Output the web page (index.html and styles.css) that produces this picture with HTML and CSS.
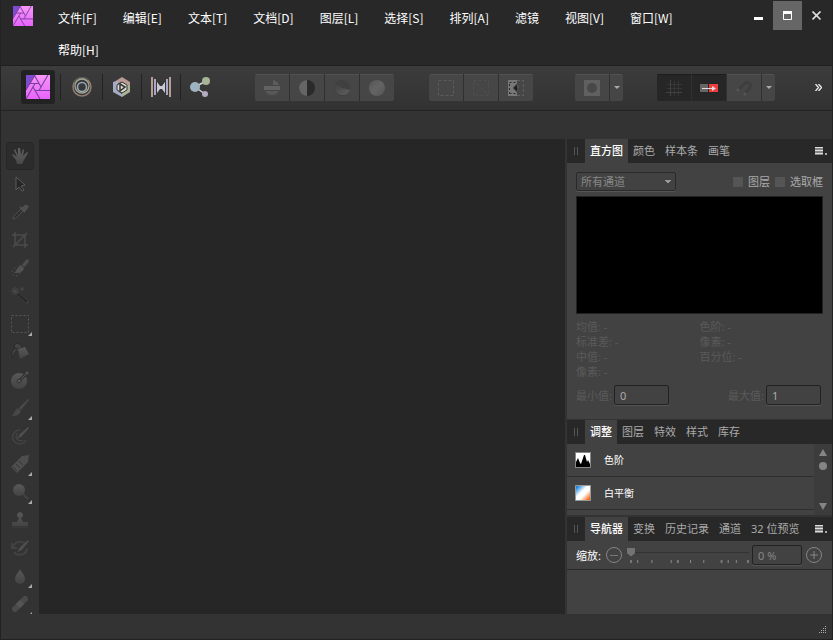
FILE: index.html
```html
<!doctype html>
<html lang="zh-CN">
  <head>
    <meta charset="utf-8">
    <meta name="viewport" content="width=device-width, initial-scale=1">
    <title>Photo</title>
    <link rel="stylesheet" href="styles.css">
  </head>
  <body>
    <svg class="defs" width="0" height="0" aria-hidden="true">
      <defs>
        <linearGradient id="pink" x1="0" y1="0" x2="0" y2="1">
          <stop offset="0" stop-color="#f797f8"/><stop offset="1" stop-color="#e763fb"/>
        </linearGradient>
        <linearGradient id="tool" x1="0" y1="0" x2="0" y2="1">
          <stop offset="0" stop-color="#626262"/><stop offset="1" stop-color="#484848"/>
        </linearGradient>
        <linearGradient id="sweep" x1="0" y1="0" x2="1" y2="1">
          <stop offset="0" stop-color="#404040"/><stop offset="1" stop-color="#606060"/>
        </linearGradient>
        <linearGradient id="sphere" x1="0" y1="0" x2="1" y2="1">
          <stop offset="0" stop-color="#565656"/><stop offset="0.5" stop-color="#646464"/><stop offset="1" stop-color="#545454"/>
        </linearGradient>
        <linearGradient id="balance" x1="0" y1="0" x2="1" y2="1">
          <stop offset="0.1" stop-color="#1683dc"/><stop offset="0.42" stop-color="#fff"/>
          <stop offset="0.6" stop-color="#fff"/><stop offset="0.9" stop-color="#f36a1c"/>
        </linearGradient>
        <symbol id="logo" viewBox="0 0 24 24">
          <rect width="24" height="24" fill="url(#pink)"/>
          <path d="M0 0h9L0 15z" fill="#7d4bd0"/>
          <path d="M9 0L0 15M13 8.500H4M15 12L8.300 0M13 15.500L19.500 4.200 22 0M9 15.500h15M7 12l7 12M9 8.500L0 24" fill="none" stroke="#7a3f9c" stroke-width="1.100"/>
        </symbol>
      </defs>
    </svg>

    <header class="titlebar">
      <svg class="app-icon" width="20" height="20"><use href="#logo"/></svg>
      <nav class="menu">
        <a href="#">文件[F]</a>
        <a href="#">编辑[E]</a>
        <a href="#">文本[T]</a>
        <a href="#">文档[D]</a>
        <a href="#">图层[L]</a>
        <a href="#">选择[S]</a>
        <a href="#">排列[A]</a>
        <a href="#">滤镜</a>
        <a href="#">视图[V]</a>
        <a href="#">窗口[W]</a>
        <a href="#">帮助[H]</a>
      </nav>
      <div class="window-buttons">
        <button type="button" aria-label="最小化"><svg width="10" height="10"><path d="M0 6h9v3H0z" fill="#fff"/></svg></button>
        <button type="button" class="maximize" aria-label="最大化"><svg width="10" height="10"><path d="M.5 1v7.500h8V1z" fill="none" stroke="#fff"/><path d="M0 0h9v3H0z" fill="#fff"/></svg></button>
        <button type="button" aria-label="关闭"><svg width="10" height="10"><path d="M.5.5l8 8m0-8l-8 8" stroke="#ddd" stroke-width="1.700"/></svg></button>
      </div>
    </header>

    <div class="toolbar">
      <div class="personas">
        <button type="button" class="active" aria-label="Photo"><svg width="24" height="24"><use href="#logo"/></svg></button>
        <button type="button" aria-label="Liquify"><svg width="20" height="20" viewBox="0 0 20 20" fill="none">
          <circle cx="10" cy="10" r="9" stroke="#8f7a76" stroke-width="1.500"/>
          <path d="M2 6a9 9 0 0 1 14-3" stroke="#5e5c5a" stroke-width="2"/>
          <circle cx="10" cy="9" r="7" stroke="#a4a98e" stroke-width="1.300"/>
          <circle cx="10" cy="10" r="4.500" stroke="#97a6b8" stroke-width="1.600"/></svg></button>
        <button type="button" aria-label="Develop"><svg width="20" height="20" viewBox="0 0 20 20">
          <path d="M2 5l8-5 8 5v6l-5-4-4-2-4 2z" fill="#b99a94"/>
          <path d="M1 5l5-1v10l4 3v3l-9-5z" fill="#a5abc4"/>
          <path d="M18 9v6l-8 5v-4l5-3V7z" fill="#a9b596"/>
          <path d="M10 5l5 3v5l-5 3-5-3V8z" fill="#dadbd0" stroke="#343434"/>
          <path d="M8 7l5 3-5 4z" fill="#dadbd0" stroke="#343434" stroke-width="1.500"/></svg></button>
        <button type="button" aria-label="Tone Mapping"><svg width="20" height="20" viewBox="0 0 20 20">
          <path d="M0 0h2v20H0zM18 0h2v20h-2z" fill="#b89d91"/>
          <path d="M3 2h2v16H3zM15 2h2v16h-2z" fill="#a4a8c3"/>
          <path d="M6 5l3 4h2l3-4v11l-3-4H9l-3 4z" fill="#ccc9d7"/></svg></button>
        <button type="button" aria-label="Export"><svg width="20" height="20" viewBox="0 0 20 20">
          <path d="M5 10l11-6M5 10l10 7" stroke="#d5d5d5" stroke-width="1.500"/>
          <circle cx="5" cy="10" r="5" fill="#9db4c0"/><circle cx="16" cy="4" r="4" fill="#a7b497"/><circle cx="15" cy="17" r="3" fill="#b5abc0"/></svg></button>
      </div>

      <div class="group auto">
        <button type="button" aria-label="自动色阶"><svg width="16" height="16"><path d="M9 0a8 8 0 0 1 6 5H9z" fill="#5c5c5c"/><path d="M0 6h16v4H0z" fill="#626262"/><path d="M1 11h14a8 8 0 0 1-14 0z" fill="#585858"/></svg></button>
        <button type="button" aria-label="自动对比度"><svg width="16" height="16"><circle cx="8" cy="8" r="8" fill="#2a2a2a"/><path d="M8 0a8 8 0 0 0 0 16z" fill="#656565"/></svg></button>
        <button type="button" aria-label="自动颜色"><svg width="16" height="16"><circle cx="8" cy="8" r="8" fill="#404040"/><path d="M8 8L1 4a8 8 0 1 0 15 6z" fill="url(#sweep)"/></svg></button>
        <button type="button" aria-label="自动白平衡"><svg width="16" height="16"><circle cx="8" cy="8" r="8" fill="url(#sphere)"/></svg></button>
      </div>

      <div class="group selection">
        <button type="button" aria-label="全选"><svg width="16" height="16"><path d="M.5.5h15v15H.5z" fill="none" stroke="#5c5c5c" stroke-dasharray="3 2"/></svg></button>
        <button type="button" aria-label="取消选择"><svg width="16" height="16"><path d="M.5.5h15v15H.5zL15 15" fill="none" stroke="#4e4e4e" stroke-dasharray="3 2"/></svg></button>
        <button type="button" aria-label="反选"><svg width="16" height="16"><path d="M0 0h9v16H0z" fill="#777"/><path d="M1.500 2.500h6M1.500 13.500h6M1.500 4v9" fill="none" stroke="#292929" stroke-dasharray="2 2"/><path d="M9 4v8L5 8z" fill="#222"/><path d="M9 .5h6.500v15H9M10 5v6" fill="none" stroke="#606060" stroke-dasharray="3 2"/></svg></button>
      </div>

      <div class="group mask">
        <button type="button" aria-label="快速蒙版"><svg width="16" height="16"><path d="M0 0h16v16H0z" fill="#606060"/><circle cx="8" cy="8" r="5" fill="#484848"/></svg></button>
        <button type="button" class="arrow" aria-label="蒙版选项"><svg width="6" height="4"><path d="M0 0h6L3 3z" fill="#aaa"/></svg></button>
      </div>

      <div class="group snapping">
        <button type="button" class="on" aria-label="网格"><svg width="16" height="16"><path d="M1 4.500h15M1 8.500h15M4.500 1v15M8.500 1v15M12.500 1v15" stroke="#363636"/><path d="M0 12.500h16M4.500 0v16" stroke="#424242"/></svg></button>
        <button type="button" class="on" aria-label="强制像素对齐"><svg width="18" height="8"><path d="M0 0h8v8H0z" fill="#666"/><path d="M9 0h9v8H9z" fill="#ef3d3d"/><path d="M2 4.500h11" stroke="#ddd"/><path d="M12 2l4 2.500-4 2.500z" fill="#ddd"/></svg></button>
        <button type="button" aria-label="吸附"><svg width="16" height="16"><path d="M2 10l6-6c3-4 9 0 5 5l-5 5" fill="none" stroke="#3e3e3e" stroke-width="3"/><path d="M1 11l2-2M8 15l2-2" stroke="#555" stroke-width="3"/></svg></button>
        <button type="button" class="arrow" aria-label="吸附选项"><svg width="6" height="4"><path d="M0 0h6L3 3z" fill="#aaa"/></svg></button>
      </div>
      <button type="button" class="more" aria-label="更多"><svg width="7" height="7"><path d="M.5 0l3 3.500-3 3.500M3.500 0l3 3.500-3 3.500" fill="none" stroke="#eee" stroke-width="1.300"/></svg></button>
    </div>

    <div class="context-bar"></div>

    <main class="workspace">
      <div class="tools">
        <button type="button" class="active" aria-label="抓手"><svg width="18" height="18"><path d="M6 17l-1-4-4-5 1-1 4 3-3-7 1-1 3 6V1h2l1 7 2-6 1 1-1 6 4-4 1 1-4 7-2 4z" fill="url(#tool)"/></svg></button>
        <button type="button" aria-label="移动"><svg width="18" height="18"><path d="M5 2l9 8-4 1 3 4-2 1-3-4-3 3z" fill="#232323" stroke="#666"/></svg></button>
        <button type="button" aria-label="颜色选取器"><svg width="18" height="18"><path d="M2 16l1-3 7-7 2 2-7 7z" fill="#2c2c2c" stroke="#555"/><path d="M9 4l5 5M11 6l3-3c2-1 3 1 2 2l-3 3z" stroke="#585858" stroke-width="2" fill="#585858"/></svg></button>
        <button type="button" aria-label="裁剪"><svg width="18" height="18"><path d="M4 1v13h13M1 4h13v13M2 16L16 2" fill="none" stroke="#525252" stroke-width="1.500"/></svg></button>
        <button type="button" aria-label="选择画笔"><svg width="18" height="18"><path d="M11 6l4-5 3-1-1 4-4 4z" fill="#555"/><path d="M10 6l3 3c-1 5-6 5-10 5 3-2 3-6 7-8z" fill="#5a5a5a"/><circle cx="5" cy="13" r="4" fill="none" stroke="#555" stroke-dasharray="2 2"/></svg></button>
        <button type="button" aria-label="魔棒"><svg width="18" height="18"><path d="M5 5l12 11" stroke="#484848" stroke-width="3"/><path d="M6 6l10 9" stroke="#242424" stroke-width="2"/><path d="M4 0v8M0 4h8M1 1l6 6M7 1L1 7M11 0v4M9 2h4" stroke="#505050"/></svg></button>
        <button type="button" class="more-tools" aria-label="矩形选框"><svg width="18" height="18"><path d="M.5.5h17v17H.5z" fill="none" stroke="#636363" stroke-dasharray="2 2"/></svg></button>
        <button type="button" aria-label="填充"><svg width="18" height="18"><path d="M7 6l7-2 4 7-9 5z" fill="url(#tool)"/><path d="M7 6c-7-1-6 4-6 9 3-2 1-7 6-7M4 5c-3-5 5-7 7 0" fill="#494949" stroke="#292929"/></svg></button>
        <button type="button" aria-label="渐变"><svg width="18" height="18"><circle cx="8" cy="10" r="8" fill="url(#tool)"/><path d="M8 10l8-8" stroke="#303030" stroke-width="3"/><path d="M8 10l8-8" stroke="#606060"/><circle cx="8" cy="10" r="2" fill="#606060" stroke="#333"/><circle cx="16" cy="2" r="1.500" fill="#5c5c5c"/></svg></button>
        <button type="button" class="more-tools" aria-label="画笔"><svg width="18" height="18"><path d="M8 9l9-9 1 1-8 10z" fill="#505050"/><path d="M7 9l3 3c-2 5-6 5-10 5 4-2 3-6 7-8z" fill="#4c4c4c"/></svg></button>
        <button type="button" aria-label="颜色替换"><svg width="18" height="18"><path d="M9 3a7 7 0 1 0 6 10M7 6a4 4 0 1 0 5 7" fill="none" stroke="#484848" stroke-width="1.500"/><path d="M9 7l8-7 1 1-7 8-5 3z" fill="#585858"/></svg></button>
        <button type="button" class="more-tools" aria-label="擦除"><svg width="18" height="18"><path d="M0 12L11 1l7-1-1 7L6 18z" fill="#555"/><path d="M2 12l4 4M5 9l4 4M8 6l4 4" stroke="#343434"/></svg></button>
        <button type="button" class="more-tools" aria-label="减淡"><svg width="18" height="18"><path d="M10 9l7 7" stroke="#484848" stroke-width="2"/><circle cx="8" cy="7" r="6" fill="url(#tool)"/></svg></button>
        <button type="button" aria-label="克隆"><svg width="18" height="18"><path d="M1 15v-4h5l2-4a3 3 0 1 1 2 0l2 4h5v4z" fill="url(#tool)"/><path d="M2 16h14" stroke="#424242"/></svg></button>
        <button type="button" aria-label="撤销画笔"><svg width="18" height="18"><path d="M1 4v5h5M2 8c3-7 10-6 13-3M16 9c0 7-10 9-13 4" fill="none" stroke="#464646" stroke-width="2"/><path d="M9 8l8-7 1 1-7 9-5 2z" fill="#555"/></svg></button>
        <button type="button" class="more-tools" aria-label="模糊"><svg width="18" height="18"><path d="M9 2c1 3 5 6 5 10a5 5 0 0 1-10 0c0-4 4-7 5-10z" fill="url(#tool)"/></svg></button>
        <button type="button" class="more-tools" aria-label="修复"><svg width="18" height="18"><path d="M4 14L14 4" stroke="#505050" stroke-width="6" stroke-linecap="round"/><path d="M7 11l4-4" stroke="#5e5e5e" stroke-width="6"/></svg></button>
      </div>

      <div class="canvas"></div>

      <aside class="panels">
        <section class="panel">
          <div class="tabs">
            <span class="grip"></span>
            <button type="button" class="active">直方图</button>
            <button type="button">颜色</button>
            <button type="button">样本条</button>
            <button type="button">画笔</button>
            <button type="button" class="panel-menu" aria-label="面板选项"><svg width="12" height="8"><path d="M0 .5h8M0 3.500h8M0 6.500h8" stroke="#ddd" stroke-width="2"/><path d="M10 6h2v2h-2z" fill="#aaa"/></svg></button>
          </div>
          <div class="histogram">
            <div class="channel-row">
              <select aria-label="通道"><option>所有通道</option></select>
              <label><input type="checkbox">图层</label>
              <label><input type="checkbox">选取框</label>
            </div>
            <div class="graph"></div>
            <div class="stats">
              <div>均值: -<br>标准差: -<br>中值: -<br>像素: -</div>
              <div>色阶: -<br>像素: -<br>百分位: -</div>
            </div>
            <div class="range-row">
              <label>最小值:<input type="text" class="field" value="0"></label>
              <label>最大值:<input type="text" class="field" value="1"></label>
            </div>
          </div>
        </section>

        <section class="panel">
          <div class="tabs">
            <span class="grip"></span>
            <button type="button" class="active">调整</button>
            <button type="button">图层</button>
            <button type="button">特效</button>
            <button type="button">样式</button>
            <button type="button">库存</button>
          </div>
          <div class="adjustments">
            <ul>
              <li><svg width="16" height="16"><path d="M.5.5h15v15H.5z" fill="#fff" stroke="#888"/><path d="M1 15v-5l2-4 2 5 1 1 3-9 1 0 2 7 1-2 2 4v3z" fill="#000"/></svg>色阶</li>
              <li><svg width="16" height="16"><path d="M.5.5h15v15H.5z" fill="url(#balance)" stroke="#999"/></svg>白平衡</li>
            </ul>
            <div class="scrollbar">
              <svg width="8" height="7"><path d="M4 0l4 7H0z" fill="#858585"/></svg>
              <span class="thumb"></span>
              <svg class="down" width="8" height="7"><path d="M4 7l4-7H0z" fill="#858585"/></svg>
            </div>
          </div>
        </section>

        <section class="panel navigator">
          <div class="tabs">
            <span class="grip"></span>
            <button type="button" class="active">导航器</button>
            <button type="button">变换</button>
            <button type="button">历史记录</button>
            <button type="button">通道</button>
            <button type="button">32 位预览</button>
            <button type="button" class="panel-menu" aria-label="面板选项"><svg width="12" height="8"><path d="M0 .5h8M0 3.500h8M0 6.500h8" stroke="#ddd" stroke-width="2"/><path d="M10 6h2v2h-2z" fill="#aaa"/></svg></button>
          </div>
          <div class="zoom-row">
            <label for="zoom">缩放:</label>
            <button type="button" aria-label="缩小"><svg width="16" height="16"><circle cx="8" cy="8" r="7.500" fill="none" stroke="#858585"/><path d="M4 8.500h8" stroke="#777"/></svg></button>
            <div class="slider">
              <input type="range" id="zoom" min="0" max="100" value="0">
              <svg width="100%" height="3" viewBox="0 0 120 3" preserveAspectRatio="none"><path d="M3 0h2v3H3zM49 0h2v3h-2zM92 0h2v3h-2zM118 0h2v3h-2z" fill="#777"/><path d="M10 0h1v3h-1zM24 0h1v3h-1zM43 0h1v3h-1zM62 0h1v3h-1zM75 0h1v3h-1zM99 0h1v3h-1zM107 0h1v3h-1z" fill="#888"/></svg>
            </div>
            <input type="text" class="field percent" value="0 %" aria-label="缩放比例">
            <button type="button" aria-label="放大"><svg width="16" height="16"><circle cx="8" cy="8" r="7.500" fill="none" stroke="#858585"/><path d="M4 8h8M8 4v8" stroke="#858585"/></svg></button>
          </div>
        </section>
      </aside>
    </main>

    <footer class="statusbar">
      <svg width="8" height="8"><path d="M6 0h1v1H6zM4 2h1v1H4zM6 2h1v1H6zM2 4h1v1H2zM4 4h1v1H4zM6 4h1v1H6zM0 6h1v1H0zM2 6h1v1H2zM4 6h1v1H4zM6 6h1v1H6z" fill="#aaa"/></svg>
    </footer>
  </body>
</html>
```

FILE: styles.css
```css
* {
  box-sizing: border-box;
}
body {
  display: flex;
  flex-direction: column;
  height: 100vh;
  margin: 0;
  border: 1px solid #222;
  border-top: none;
  background: #333;
  color: #aaa;
  font: 11px/15px "Noto Sans", "Noto Sans CJK SC", sans-serif;
  overflow: hidden;
}
button {
  display: flex;
  align-items: center;
  justify-content: center;
  margin: 0;
  padding: 0;
  border: none;
  background: none;
  color: inherit;
  font: inherit;
}
svg {
  display: block;
  flex: none;
}
.defs {
  position: absolute;
}

/* title bar */
.titlebar {
  display: flex;
  align-items: flex-start;
  height: 66px;
  background: #282828;
  border-bottom: 1px solid #1f1f1f;
}
.app-icon {
  margin: 6px 12px 0;
}
.menu {
  display: flex;
  flex: 1;
  flex-wrap: wrap;
  padding-top: 2px;
}
.menu a {
  padding: 0 13px;
  color: #fff;
  font-family: "Noto Sans CJK SC", sans-serif;
  font-size: 12px;
  line-height: 32px;
  text-decoration: none;
}
.window-buttons {
  display: flex;
  padding: 1px 1px 0 0;
}
.window-buttons button {
  width: 29px;
  height: 29px;
}
.window-buttons .maximize {
  background: #666;
}

/* toolbar */
.toolbar {
  display: flex;
  align-items: center;
  height: 45px;
  padding: 0 10px 2px 20px;
  background: linear-gradient(#3c3c3c, #323232);
  border-bottom: 1px solid #222;
}
.personas {
  display: flex;
  align-items: center;
}
.personas button {
  width: 39px;
  height: 26px;
  border-left: 1px solid #222;
}
.personas .active {
  width: 34px;
  height: 34px;
  margin-right: 5px;
  border: none;
  border-radius: 3px;
  background: #222;
}
.personas .active + button {
  width: 42px;
}
.group {
  display: flex;
  gap: 1px;
  margin-left: 35px;
  border-radius: 2px;
  background: #303030;
  overflow: hidden;
}
.group.auto {
  margin-left: 36px;
}
.group.mask {
  margin-left: 42px;
}
.group.snapping {
  margin-left: 34px;
}
.group button {
  width: 34px;
  height: 27px;
  border-top: 1px solid #525252;
  background: #464646;
}
.group .arrow {
  width: 13px;
}
.group .on {
  border-color: #1c1c1c;
  background: #262626;
}
.more {
  margin-left: auto;
}
.context-bar {
  height: 28px;
}

/* workspace */
.workspace {
  display: flex;
  flex: 1;
  min-height: 0;
}
.tools {
  width: 38px;
  padding: 3px 5px 0;
  overflow: hidden;
}
.tools button {
  position: relative;
  width: 28px;
  height: 28px;
}
.tools svg {
  opacity: 0.8;
}
.tools .active {
  border: 1px solid #282828;
  border-radius: 3px;
  background: #2c2c2c;
}
.tools .active svg {
  opacity: 1;
}
.tools .more-tools::after {
  content: "";
  position: absolute;
  right: 2px;
  bottom: 2px;
  border: 2px solid #aaa;
  border-top-color: transparent;
  border-left-color: transparent;
}
.canvas {
  flex: 1;
  background: #262626;
}

/* panels */
.panels {
  display: flex;
  flex-direction: column;
  gap: 1px;
  width: 267px;
  padding-left: 2px;
}
.panel {
  background: #424242;
}
.tabs {
  display: flex;
  height: 24px;
  background: #282828;
}
.tabs button {
  padding: 0 5px 1px;
  white-space: nowrap;
}
.tabs .active {
  background: #424242;
  color: #fff;
  font-weight: 500;
}
.tabs .panel-menu {
  margin-left: auto;
}
.grip {
  width: 4px;
  height: 8px;
  margin: 8px 7px;
  border: solid #555;
  border-width: 0 1px;
}
.histogram {
  height: 256px;
  padding: 9px 9px 0;
}
.channel-row {
  display: flex;
  align-items: center;
  gap: 5px;
}
.channel-row label {
  display: flex;
  align-items: center;
  gap: 5px;
}
.channel-row select {
  appearance: none;
  width: 100px;
  height: 19px;
  margin-right: auto;
  padding: 0 4px;
  border: 1px solid #2a2a2a;
  border-radius: 2px;
  background: linear-gradient(#999, #999) 88px 7px / 6px 1px no-repeat,
    linear-gradient(#999, #999) 89px 8px / 4px 1px no-repeat,
    linear-gradient(#999, #999) 90px 9px / 2px 1px no-repeat, #424242;
  box-shadow: 0 1px #555;
  color: #888;
  font: inherit;
}
input[type="checkbox"] {
  appearance: none;
  width: 10px;
  height: 10px;
  margin: 0;
  border-radius: 1px;
  background: #555;
}
.graph {
  height: 118px;
  margin-top: 5px;
  border: 1px solid #222;
  background: #000;
}
.stats {
  display: grid;
  grid-template-columns: 1fr 1fr;
  padding-top: 5px;
  color: #5a5a5a;
}
.range-row {
  display: flex;
  justify-content: space-between;
  padding: 6px 2px 0 0;
  color: #5a5a5a;
}
.range-row label {
  display: flex;
  align-items: center;
  gap: 2px;
}
.field {
  width: 55px;
  height: 20px;
  padding: 0 5px;
  border: 1px solid #222;
  border-radius: 2px;
  background: #424242;
  box-shadow: 0 1px #555;
  color: #aaa;
  font: inherit;
}
.adjustments {
  display: flex;
  height: 72px;
  border-bottom: 1px solid #333;
}
.adjustments ul {
  flex: 1;
  margin: 0;
  padding: 0;
  list-style: none;
}
.adjustments li {
  display: flex;
  align-items: center;
  gap: 13px;
  height: 33px;
  padding-left: 8px;
  border-bottom: 1px solid #2e2e2e;
  color: #fff;
  font-size: 10px;
}
.scrollbar {
  display: flex;
  flex-direction: column;
  align-items: center;
  gap: 6px;
  width: 18px;
  padding: 5px 0;
  background: #3c3c3c;
}
.thumb {
  width: 8px;
  height: 8px;
  border-radius: 50%;
  background: #858585;
}
.scrollbar .down {
  margin-top: auto;
}
.navigator {
  flex: 1;
}
.zoom-row {
  display: flex;
  align-items: center;
  height: 29px;
  padding: 0 10px 0 9px;
  border-bottom: 1px solid #2a2a2a;
}
.zoom-row label {
  margin-right: 5px;
  color: #fff;
}
.slider {
  display: flex;
  flex: 1;
  flex-direction: column;
  gap: 3px;
  min-width: 0;
  padding: 0 3px 0 5px;
}
.slider input {
  appearance: none;
  width: 100%;
  height: 9px;
  margin: 0;
  background: linear-gradient(#333, #333) 0 4px / 100% 1px no-repeat;
}
.slider input::-webkit-slider-thumb {
  appearance: none;
  width: 8px;
  height: 9px;
  background: #737373;
  clip-path: polygon(0 0, 100% 0, 100% 65%, 50% 100%, 0 65%);
}
.percent {
  width: 50px;
  margin-right: 4px;
  color: #888;
}

.statusbar {
  display: flex;
  align-items: flex-end;
  justify-content: flex-end;
  height: 25px;
  padding: 5px;
}
```
